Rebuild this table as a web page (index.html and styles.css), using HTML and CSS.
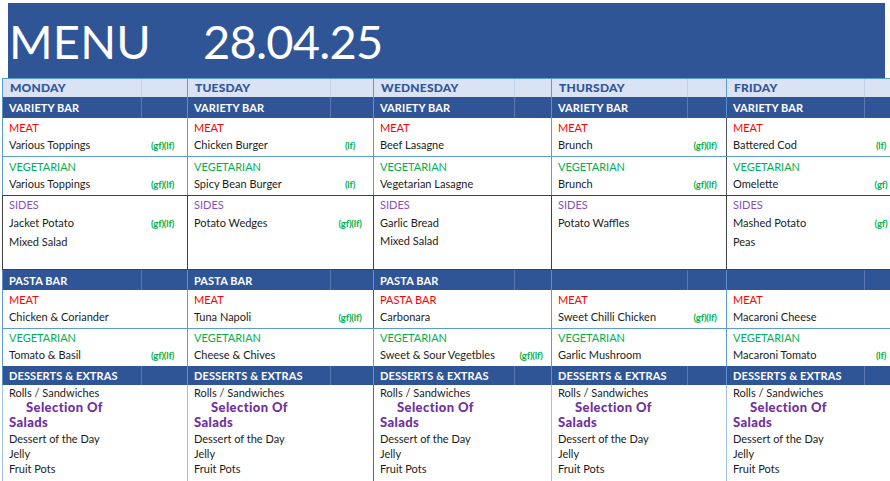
FILE: index.html
```html
<!DOCTYPE html>
<html lang="en">
<head>
<meta charset="utf-8">
<title>Menu 28.04.25</title>
<link rel="stylesheet" href="styles.css">
</head>
<body>
<div class="page">
  <header class="banner">
    <span class="title">MENU</span>
    <span class="date">28.04.25</span>
  </header>

  <div class="menu">
    <div class="row days">
      <div class="cell"><span class="main">MONDAY</span><span class="sub"></span></div>
      <div class="cell"><span class="main">TUESDAY</span><span class="sub"></span></div>
      <div class="cell"><span class="main">WEDNESDAY</span><span class="sub"></span></div>
      <div class="cell"><span class="main">THURSDAY</span><span class="sub"></span></div>
      <div class="cell"><span class="main">FRIDAY</span><span class="sub"></span></div>
    </div>

    <div class="row bar tall">
      <div class="cell"><span class="main">VARIETY BAR</span><span class="sub"></span></div>
      <div class="cell"><span class="main">VARIETY BAR</span><span class="sub"></span></div>
      <div class="cell"><span class="main">VARIETY BAR</span><span class="sub"></span></div>
      <div class="cell"><span class="main">VARIETY BAR</span><span class="sub"></span></div>
      <div class="cell"><span class="main">VARIETY BAR</span><span class="sub"></span></div>
    </div>

    <div class="row food meat first">
      <div class="cell"><span class="label">MEAT</span><span class="dish">Various Toppings</span><span class="tag">(gf)(lf)</span></div>
      <div class="cell"><span class="label">MEAT</span><span class="dish">Chicken Burger</span><span class="tag">(lf)</span></div>
      <div class="cell"><span class="label">MEAT</span><span class="dish">Beef Lasagne</span></div>
      <div class="cell"><span class="label">MEAT</span><span class="dish">Brunch</span><span class="tag">(gf)(lf)</span></div>
      <div class="cell dark"><span class="label">MEAT</span><span class="dish">Battered Cod</span><span class="tag">(lf)</span></div>
    </div>

    <div class="row food veg v1">
      <div class="cell"><span class="label">VEGETARIAN</span><span class="dish">Various Toppings</span><span class="tag">(gf)(lf)</span></div>
      <div class="cell"><span class="label">VEGETARIAN</span><span class="dish">Spicy Bean Burger</span><span class="tag">(lf)</span></div>
      <div class="cell"><span class="label">VEGETARIAN</span><span class="dish">Vegetarian Lasagne</span></div>
      <div class="cell"><span class="label">VEGETARIAN</span><span class="dish">Brunch</span><span class="tag">(gf)(lf)</span></div>
      <div class="cell dark"><span class="label">VEGETARIAN</span><span class="dish">Omelette</span><span class="tag">(gf)</span></div>
    </div>

    <div class="row food sides">
      <div class="cell"><span class="label">SIDES</span><span class="dish">Jacket Potato</span><span class="tag">(gf)(lf)</span><span class="dish">Mixed Salad</span></div>
      <div class="cell"><span class="label">SIDES</span><span class="dish">Potato Wedges</span><span class="tag">(gf)(lf)</span></div>
      <div class="cell"><span class="label">SIDES</span><span class="dish">Garlic Bread</span><span class="dish">Mixed Salad</span></div>
      <div class="cell"><span class="label">SIDES</span><span class="dish">Potato Waffles</span></div>
      <div class="cell"><span class="label">SIDES</span><span class="dish">Mashed Potato</span><span class="tag">(gf)</span><span class="dish">Peas</span></div>
    </div>

    <div class="row bar pasta">
      <div class="cell"><span class="main">PASTA BAR</span><span class="sub"></span></div>
      <div class="cell"><span class="main">PASTA BAR</span><span class="sub"></span></div>
      <div class="cell"><span class="main">PASTA BAR</span><span class="sub"></span></div>
      <div class="cell"><span class="main"></span><span class="sub"></span></div>
      <div class="cell"><span class="main"></span><span class="sub"></span></div>
    </div>

    <div class="row food meat">
      <div class="cell"><span class="label">MEAT</span><span class="dish">Chicken &amp; Coriander</span></div>
      <div class="cell"><span class="label">MEAT</span><span class="dish">Tuna Napoli</span><span class="tag">(gf)(lf)</span></div>
      <div class="cell dark"><span class="label">PASTA BAR</span><span class="dish">Carbonara</span></div>
      <div class="cell"><span class="label">MEAT</span><span class="dish">Sweet Chilli Chicken</span><span class="tag">(gf)(lf)</span></div>
      <div class="cell"><span class="label">MEAT</span><span class="dish">Macaroni Cheese</span></div>
    </div>

    <div class="row food veg v2">
      <div class="cell"><span class="label">VEGETARIAN</span><span class="dish">Tomato &amp; Basil</span><span class="tag">(gf)(lf)</span></div>
      <div class="cell"><span class="label">VEGETARIAN</span><span class="dish">Cheese &amp; Chives</span></div>
      <div class="cell"><span class="label">VEGETARIAN</span><span class="dish">Sweet &amp; Sour Vegetbles</span><span class="tag">(gf)(lf)</span></div>
      <div class="cell"><span class="label">VEGETARIAN</span><span class="dish">Garlic Mushroom</span></div>
      <div class="cell"><span class="label">VEGETARIAN</span><span class="dish">Macaroni Tomato</span><span class="tag">(lf)</span></div>
    </div>

    <div class="row bar desserts-head">
      <div class="cell"><span class="main">DESSERTS &amp; EXTRAS</span><span class="sub"></span></div>
      <div class="cell"><span class="main">DESSERTS &amp; EXTRAS</span><span class="sub"></span></div>
      <div class="cell"><span class="main">DESSERTS &amp; EXTRAS</span><span class="sub"></span></div>
      <div class="cell"><span class="main">DESSERTS &amp; EXTRAS</span><span class="sub"></span></div>
      <div class="cell"><span class="main">DESSERTS &amp; EXTRAS</span><span class="sub"></span></div>
    </div>

    <div class="row desserts">
      <div class="cell"><span class="item">Rolls / Sandwiches</span><span class="feature">Selection Of<br>Salads</span><span class="item">Dessert of the Day</span><span class="item">Jelly</span><span class="item">Fruit Pots</span></div>
      <div class="cell"><span class="item">Rolls / Sandwiches</span><span class="feature">Selection Of<br>Salads</span><span class="item">Dessert of the Day</span><span class="item">Jelly</span><span class="item">Fruit Pots</span></div>
      <div class="cell"><span class="item">Rolls / Sandwiches</span><span class="feature">Selection Of<br>Salads</span><span class="item">Dessert of the Day</span><span class="item">Jelly</span><span class="item">Fruit Pots</span></div>
      <div class="cell"><span class="item">Rolls / Sandwiches</span><span class="feature">Selection Of<br>Salads</span><span class="item">Dessert of the Day</span><span class="item">Jelly</span><span class="item">Fruit Pots</span></div>
      <div class="cell"><span class="item">Rolls / Sandwiches</span><span class="feature">Selection Of<br>Salads</span><span class="item">Dessert of the Day</span><span class="item">Jelly</span><span class="item">Fruit Pots</span></div>
    </div>
  </div>
</div>
</body>
</html>
```

FILE: styles.css
```css
* { box-sizing: border-box; margin: 0; padding: 0; }

html, body {
  width: 890px;
  height: 481px;
  overflow: hidden;
  background: #ffffff;
}

body {
  font-family: "Lato", "Liberation Sans", sans-serif;
  color: #1c1c1c;
  font-size: 11px;
}

.page {
  padding-top: 3px;
}

/* ---------- banner ---------- */
.banner {
  margin-left: 8px;
  width: 877px;
  height: 75px;
  background: #2f5597;
  color: #ffffff;
  display: flex;
  align-items: center;
  padding-left: 1px;
  padding-top: 2px;
  font-size: 47px;
  line-height: 1;
  font-weight: 400;
}

.title {
  width: 194px;
  letter-spacing: 0.2px;
}

.date {
  letter-spacing: -0.8px;
}

/* ---------- table ---------- */
.menu {
  margin-left: 2px;
  width: 900px;
}

.row {
  display: grid;
  grid-template-columns: 185px 186px 178px 175px 175px;
}

.cell {
  display: grid;
  grid-template-columns: var(--m) 1fr;
  align-content: start;
  border-left: 1px solid #5b9bd5;
}

.cell:nth-child(1) { --m: 138px; }
.cell:nth-child(2) { --m: 142px; }
.cell:nth-child(3) { --m: 140px; }
.cell:nth-child(4) { --m: 135px; }
.cell:nth-child(5) { --m: 137px; }

/* header rows */
.days {
  height: 19px;
  border-top: 1px solid #5b9bd5;
  background: #dae3f3;
  color: #2f5597;
  font-weight: 900;
  font-size: 12px;
  letter-spacing: 0.2px;
}

.days .cell,
.bar .cell {
  align-content: stretch;
}

.days .main,
.bar .main {
  padding-left: 7px;
  display: flex;
  align-items: center;
  white-space: nowrap;
}

.days .main {
  padding-bottom: 1px;
}

.days .sub {
  border-left: 1px solid #c5d3ea;
}

.bar {
  height: 20px;
  background: #2f5597;
  color: #ffffff;
  font-weight: 700;
  font-size: 11px;
  letter-spacing: 0.1px;
}

.bar.tall { height: 21px; }
.bar.desserts-head { height: 19px; }

.bar .cell {
  border-left-color: #5b8fcf;
}

.bar .sub {
  border-left: 1px solid #5a78b2;
}

.bar .main {
  padding-left: 6px;
}

/* food rows */
.food .cell {
  line-height: 17px;
  padding-top: 1px;
}

.meat { height: 38px; }
.meat .cell { padding-top: 1px; }
.v1 { height: 39px; border-top: 1px solid #5b9bd5; }
.v2 { height: 38px; border-top: 1px solid #5b9bd5; }
.v2 .cell { padding-top: 0; }

.sides {
  height: 75px;
  border-top: 1px solid #404040;
  border-bottom: 1px solid #404040;
}

.sides .cell {
  line-height: 18px;
  padding-top: 0;
  border-left-color: #404040;
}

.food .cell.dark {
  border-left-color: #555555;
}

.label {
  grid-column: 1 / -1;
  padding-left: 6px;
  white-space: nowrap;
}

.meat .label { color: #ff0000; }
.veg .label { color: #00b050; }
.sides .label { color: #8a4fc4; }

.dish {
  grid-column: 1;
  padding-left: 6px;
  white-space: nowrap;
  color: #1c1c1c;
}

.tag {
  grid-column: 2;
  text-align: center;
  color: #00b050;
  font-size: 9.5px;
  font-weight: 700;
  letter-spacing: -0.2px;
  white-space: nowrap;
  padding-right: 3px;
  padding-top: 1px;
}

/* desserts */
.desserts {
  height: 100px;
}

.desserts .cell {
  display: flex;
  flex-direction: column;
  line-height: 15.2px;
  padding-left: 6px;
  border-left-color: #9dc3e6;
}

.desserts .cell:nth-child(3) {
  border-left-color: #2e75b6;
}

.feature {
  color: #7030a0;
  font-weight: 900;
  font-size: 13px;
  letter-spacing: 0.4px;
  text-indent: 17px;
  line-height: 15.2px;
}
```
